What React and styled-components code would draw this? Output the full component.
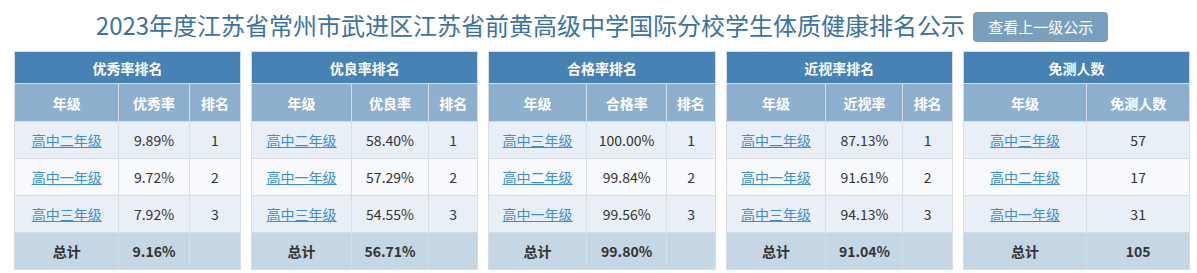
import React from "react";
import styled, { createGlobalStyle } from "styled-components";

const Global = createGlobalStyle`
  html, body { margin: 0; padding: 0; background: #fff; }
  body { font-family: "Noto Sans CJK SC", "Noto Sans", sans-serif; color: #333; }
`;

const Page = styled.div`
  width: 1197px;
  padding: 6px 7px 0 14px;
  box-sizing: border-box;
`;

const TitleBar = styled.div`
  display: flex;
  justify-content: center;
  align-items: center;
  gap: 8px;
  height: 38px;
  margin-bottom: 7px;
`;

const Title = styled.h1`
  margin: 0;
  font-size: 24px;
  font-weight: 400;
  color: #3b73a0;
  line-height: 32px;
  white-space: nowrap;
`;

const UpButton = styled.button`
  height: 30px;
  padding: 0 15px;
  border: none;
  border-radius: 4px;
  background: #7a9fbd;
  color: #fff;
  font-family: inherit;
  font-size: 15px;
  line-height: 30px;
  margin-top: 4px;
  cursor: pointer;
`;

const Tables = styled.div`
  display: grid;
  grid-template-columns: repeat(5, 1fr);
  gap: 10px;
`;

const Table = styled.table`
  width: 100%;
  border-collapse: collapse;
  border: 1px solid #d6dde5;
  font-size: 14px;
  text-align: center;
`;

const Caption = styled.th`
  height: 31px;
  padding: 0;
  background: #4682b4;
  color: #fff;
  font-weight: 700;
  font-size: 14px;
  border: 1px solid #d6dde5;
`;

const HeadCell = styled.th`
  height: 37px;
  padding: 0 6px;
  background: #8db0cf;
  color: #fff;
  font-weight: 700;
  border: 1px solid #d6dde5;
  white-space: nowrap;
`;

const Row = styled.tr`
  background: ${(p) => (p.$alt ? "#f7f9fc" : "#e8eff7")};
`;

const Cell = styled.td`
  height: 36px;
  padding: 0 6px;
  border: 1px solid #d6dde5;
  color: #333;
  white-space: nowrap;
`;

const GradeLink = styled.a`
  color: #3b8fd0;
  text-decoration: underline;
  cursor: pointer;
`;

const TotalRow = styled.tr`
  background: #c5d6e4;
`;

const TotalCell = styled.td`
  height: 36px;
  padding: 0 6px;
  border: 1px solid #d6dde5;
  font-weight: 700;
  color: #333;
`;

const data = [
  {
    title: "优秀率排名",
    cols: ["年级", "优秀率", "排名"],
    rows: [
      ["高中二年级", "9.89%", "1"],
      ["高中一年级", "9.72%", "2"],
      ["高中三年级", "7.92%", "3"],
    ],
    total: ["总计", "9.16%", ""],
  },
  {
    title: "优良率排名",
    cols: ["年级", "优良率", "排名"],
    rows: [
      ["高中二年级", "58.40%", "1"],
      ["高中一年级", "57.29%", "2"],
      ["高中三年级", "54.55%", "3"],
    ],
    total: ["总计", "56.71%", ""],
  },
  {
    title: "合格率排名",
    cols: ["年级", "合格率", "排名"],
    rows: [
      ["高中三年级", "100.00%", "1"],
      ["高中二年级", "99.84%", "2"],
      ["高中一年级", "99.56%", "3"],
    ],
    total: ["总计", "99.80%", ""],
  },
  {
    title: "近视率排名",
    cols: ["年级", "近视率", "排名"],
    rows: [
      ["高中二年级", "87.13%", "1"],
      ["高中一年级", "91.61%", "2"],
      ["高中三年级", "94.13%", "3"],
    ],
    total: ["总计", "91.04%", ""],
  },
  {
    title: "免测人数",
    cols: ["年级", "免测人数"],
    rows: [
      ["高中三年级", "57"],
      ["高中二年级", "17"],
      ["高中一年级", "31"],
    ],
    total: ["总计", "105"],
  },
];

function RankTable({ t }) {
  return (
    <Table>
      <thead>
        <tr>
          <Caption colSpan={t.cols.length}>{t.title}</Caption>
        </tr>
        <tr>
          {t.cols.map((c) => (
            <HeadCell key={c}>{c}</HeadCell>
          ))}
        </tr>
      </thead>
      <tbody>
        {t.rows.map((r, i) => (
          <Row key={i} $alt={i % 2 === 1}>
            {r.map((v, j) => (
              <Cell key={j}>{j === 0 ? <GradeLink>{v}</GradeLink> : v}</Cell>
            ))}
          </Row>
        ))}
        <TotalRow>
          {t.total.map((v, j) => (
            <TotalCell key={j}>{v}</TotalCell>
          ))}
        </TotalRow>
      </tbody>
    </Table>
  );
}

export default function App() {
  return (
    <>
      <Global />
      <Page>
        <TitleBar>
          <Title>2023年度江苏省常州市武进区江苏省前黄高级中学国际分校学生体质健康排名公示</Title>
          <UpButton>查看上一级公示</UpButton>
        </TitleBar>
        <Tables>
          {data.map((t) => (
            <RankTable key={t.title} t={t} />
          ))}
        </Tables>
      </Page>
    </>
  );
}
